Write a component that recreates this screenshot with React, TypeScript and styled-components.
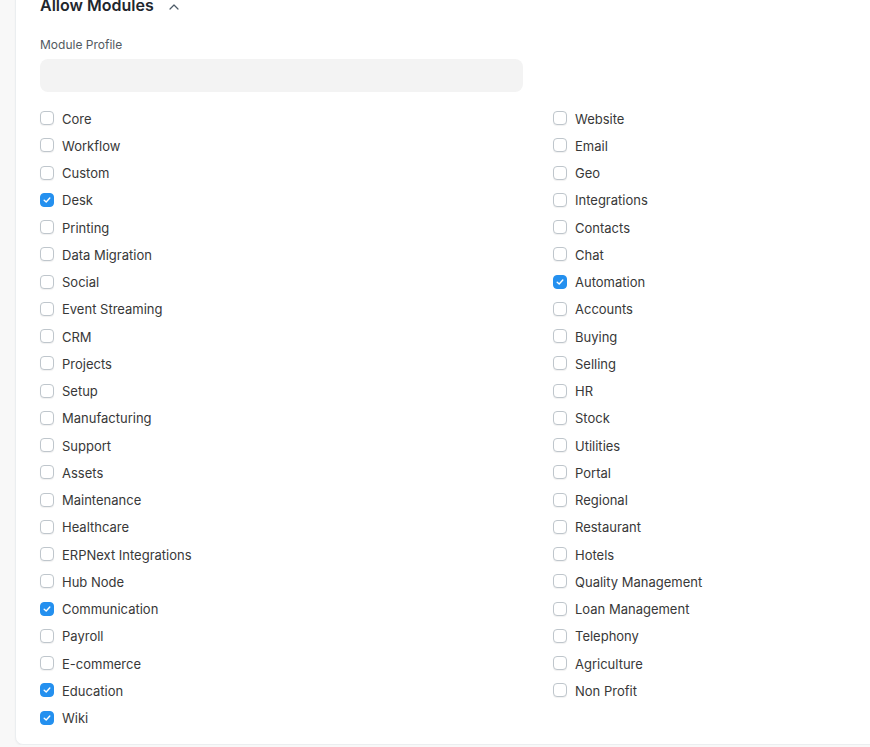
import React from 'react';
import styled, { createGlobalStyle } from 'styled-components';

const GlobalStyle = createGlobalStyle`
  html, body {
    margin: 0;
    padding: 0;
    background: #f8f8f8;
    overflow: hidden;
    font-family: Inter, "Liberation Sans", sans-serif;
    -webkit-font-smoothing: antialiased;
  }
`;

const Page = styled.div`
  margin-top: -26px;
  padding-left: 15px;
`;

const Card = styled.section`
  width: 1100px;
  background: #fff;
  border: 1px solid #ebeef0;
  border-radius: 8px;
  box-shadow: 0 1px 2px rgba(0, 0, 0, 0.04);
  padding: 20px 24px 12px;
`;

const SectionHead = styled.div`
  display: flex;
  align-items: center;
  gap: 14px;
  height: 20px;
`;

const SectionTitle = styled.h4`
  margin: 0;
  font-size: 16px;
  line-height: 20px;
  font-weight: 600;
  color: #1f272e;
`;

const Chevron = styled.svg`
  width: 12px;
  height: 12px;
  margin-top: 4px;
`;

const Field = styled.div`
  width: 483px;
  margin-top: 22px;
`;

const Label = styled.label`
  display: block;
  font-size: 12px;
  line-height: 16px;
  color: #525a62;
  margin-bottom: 6px;
`;

const Input = styled.div`
  height: 33px;
  border-radius: 8px;
  background: #f3f3f3;
`;

const Columns = styled.div`
  display: grid;
  grid-template-columns: 513px 513px;
  margin-top: 13px;
`;

const Column = styled.div`
  display: flex;
  flex-direction: column;
`;

const Row = styled.label`
  display: flex;
  align-items: center;
  height: 27.25px;
  gap: 8px;
  font-size: 13px;
  color: #383838;
`;

const Box = styled.span<{ $on: boolean }>`
  width: 14px;
  height: 14px;
  box-sizing: border-box;
  border-radius: 4px;
  border: 1px solid ${({ $on }) => ($on ? '#2490ef' : '#bfc6cc')};
  background: ${({ $on }) => ($on ? '#2490ef' : '#fff')};
  box-shadow: ${({ $on }) => ($on ? 'none' : '0 1px 1px rgba(0,0,0,0.06)')};
  display: flex;
  align-items: center;
  justify-content: center;
  flex-shrink: 0;
  margin-top: -1px;
`;

const left: [string, boolean][] = [
  ['Core', false], ['Workflow', false], ['Custom', false], ['Desk', true],
  ['Printing', false], ['Data Migration', false], ['Social', false],
  ['Event Streaming', false], ['CRM', false], ['Projects', false], ['Setup', false],
  ['Manufacturing', false], ['Support', false], ['Assets', false],
  ['Maintenance', false], ['Healthcare', false], ['ERPNext Integrations', false],
  ['Hub Node', false], ['Communication', true], ['Payroll', false],
  ['E-commerce', false], ['Education', true], ['Wiki', true],
];

const right: [string, boolean][] = [
  ['Website', false], ['Email', false], ['Geo', false], ['Integrations', false],
  ['Contacts', false], ['Chat', false], ['Automation', true], ['Accounts', false],
  ['Buying', false], ['Selling', false], ['HR', false], ['Stock', false],
  ['Utilities', false], ['Portal', false], ['Regional', false], ['Restaurant', false],
  ['Hotels', false], ['Quality Management', false], ['Loan Management', false],
  ['Telephony', false], ['Agriculture', false], ['Non Profit', false],
];

const Check = ({ label, on }: { label: string; on: boolean }) => (
  <Row>
    <Box $on={on}>
      {on && (
        <svg width="8" height="8" viewBox="0 0 8 8" fill="none">
          <path d="M1.2 4.2 L3.2 6 L6.8 2" stroke="#fff" strokeWidth="1.4" strokeLinecap="round" strokeLinejoin="round" />
        </svg>
      )}
    </Box>
    <span>{label}</span>
  </Row>
);

export default function App() {
  return (
    <Page>
      <GlobalStyle />
      <Card>
        <SectionHead>
          <SectionTitle>Allow Modules</SectionTitle>
          <Chevron viewBox="0 0 12 12" fill="none">
            <path d="M2 8 L6 4 L10 8" stroke="#4c5a67" strokeWidth="1.2" strokeLinecap="round" strokeLinejoin="round" />
          </Chevron>
        </SectionHead>
        <Field>
          <Label>Module Profile</Label>
          <Input />
        </Field>
        <Columns>
          <Column>
            {left.map(([l, on]) => <Check key={l} label={l} on={on} />)}
          </Column>
          <Column>
            {right.map(([l, on]) => <Check key={l} label={l} on={on} />)}
          </Column>
        </Columns>
      </Card>
    </Page>
  );
}
